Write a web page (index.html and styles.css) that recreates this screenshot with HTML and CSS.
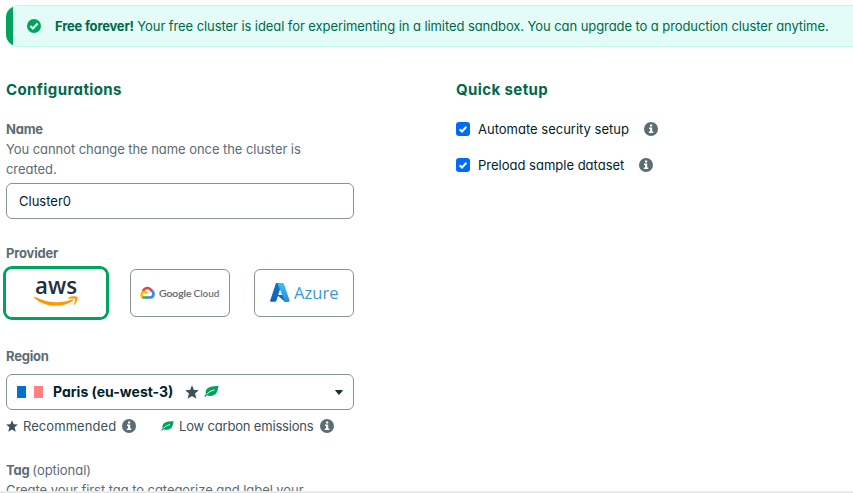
FILE: index.html
```html
<!DOCTYPE html>
<html lang="en">
<head>
<meta charset="utf-8">
<title>Create cluster</title>
<link rel="stylesheet" href="styles.css">
</head>
<body>
<svg class="defs" width="0" height="0" aria-hidden="true">
  <symbol id="info" viewBox="0 0 14 14"><circle cx="7" cy="7" r="7" fill="#5c6c75"/><path d="M6 2.600h2.200v2H6zM5 5.600h3.200v4h1.100v1.400H4.800V9.600H6V7H5z" fill="#fff"/></symbol>
  <symbol id="star" viewBox="0 0 14 14"><path d="M7 .2l1.900 4.700 5 .3-3.900 3.200 1.400 5.400L7 11l-4.400 2.800L4 8.400.1 5.200l5-.3z" fill="#3d4f58"/></symbol>
  <symbol id="leaf" viewBox="0 0 15 13"><path d="M14.700.9C11 .9 5.500 1 3 3.700 1.500 5.400 1.400 7.300 2 8.900L.3 11.100l.8.9 1.900-1.700c3.400 1.300 7.600.6 9.600-2.500C14 5.500 13.800 2.800 14.700.9z" fill="#00a35c"/><path d="M3 9.200C5 6.700 7.300 5.500 10.500 4.900" fill="none" stroke="#fff" stroke-width="1"/></symbol>
  <symbol id="check" viewBox="0 0 14 14"><path d="M3.700 7.200l2.300 2.300 4.400-4.700" fill="none" stroke="#fff" stroke-width="2"/></symbol>
</svg>
<div class="banner">
  <svg class="banner-icon" viewBox="0 0 14 14"><circle cx="7" cy="7" r="7" fill="#00a35c"/><path d="M3.300 7l2.600 2.600 4.800-5" fill="none" stroke="#e3fcf7" stroke-width="2.100"/></svg>
  <p><b>Free forever!</b> <span class="banner-text">Your free cluster is ideal for experimenting in a limited sandbox. You can upgrade to a production cluster anytime.</span></p>
</div>
<main class="columns">
  <section class="config">
    <h2>Configurations</h2>
    <div class="label">Name</div>
    <p class="help">You cannot change the name once the cluster is<br>created.</p>
    <div class="input">Cluster0</div>
    <div class="label provider-label">Provider</div>
    <div class="providers">
      <div class="card selected">
        <svg width="44" height="30" viewBox="0 0 44 30"><text x="1" y="15.500" class="aws" textLength="42" lengthAdjust="spacingAndGlyphs">aws</text><path d="M0 19.200q.3-.9 1.300-.3C13 25 27 25.800 38.600 21.300q1.600-.4.800 1C29 30.500 10.500 29.500.3 20z" fill="#ff9900"/><path d="M34.500 19.700c2.600-1.700 8-1.800 8.800-.8.700 1.300-.3 5.600-2.900 7.900q-1 .6-.5-.6c.8-2 1.700-4.400 1.200-5-.8-.9-3.700-.6-6.200-.500q-1-.2-.4-1z" fill="#ff9900"/></svg>
      </div>
      <div class="card">
        <svg width="80" height="14" viewBox="0 0 80 14"><g fill="none" stroke-width="2.700"><path d="M3 5.500C4.500 1.200 9.500.7 11.500 4.900" stroke="#ea4335"/><path d="M11 4.300c3.600 1.500 3.300 7.200-.7 7.200H7.500" stroke="#4285f4"/><path d="M8 11.500H4.200c-1 0-1.600-.3-2.200-.9" stroke="#34a853"/><path d="M2.700 11C.5 9 1.700 5.700 4.500 5.900c1.400 0 2.200.8 2.700 1.800" stroke="#fbbc05"/></g><text x="19" y="10.800" class="google" textLength="32.500" lengthAdjust="spacingAndGlyphs">Google</text><text x="53.500" y="10.800" class="google light" textLength="26" lengthAdjust="spacingAndGlyphs">Cloud</text></svg>
      </div>
      <div class="card">
        <svg width="70" height="22" viewBox="0 0 70 22"><defs><linearGradient id="az" x1="0" y1="1" x2="1" y2="0"><stop offset="0" stop-color="#0b63b6"/><stop offset="1" stop-color="#1473c9"/></linearGradient><linearGradient id="az2" x1="0" y1="0" x2="0" y2="1"><stop offset="0" stop-color="#3cc4f2"/><stop offset="1" stop-color="#2589df"/></linearGradient></defs><path d="M7 1h6L7.500 18.500q-.4 1.300-1.700 1.300H1.900Q.7 19.800 1.200 18.500z" fill="url(#az)"/><path d="M8 13h8l3 6.800h-3z" fill="#0868bd"/><path d="M8.500 1h5.200q1 0 1.300 1l5.600 16.500q.4 1.300-.9 1.300h-5.300q1.100-.5.700-1.500z" fill="url(#az2)"/><text x="25" y="17" class="azure" textLength="44.500" lengthAdjust="spacingAndGlyphs">Azure</text></svg>
      </div>
    </div>
    <div class="label region-label">Region</div>
    <div class="select">
      <span class="flag"></span>
      <span class="region">Paris (eu-west-3)</span>
      <svg class="star-lg"><use href="#star"/></svg>
      <svg class="leaf-lg"><use href="#leaf"/></svg>
      <svg class="caret" viewBox="0 0 8 5"><path d="M.5 0h7q.7 0 .3.600L4.500 4.500q-.5.500-1 0L.2.600Q-.2 0 .5 0z" fill="#1c2d38"/></svg>
    </div>
    <div class="legend">
      <svg class="star-sm"><use href="#star"/></svg><span class="rec">Recommended</span><svg class="info"><use href="#info"/></svg>
      <svg class="leaf-sm"><use href="#leaf"/></svg><span class="low">Low carbon emissions</span><svg class="info"><use href="#info"/></svg>
    </div>
    <div class="label tag-label">Tag <span class="optional">(optional)</span></div>
    <p class="help">Create your first tag to categorize and label your</p>
  </section>
  <section class="quick">
    <h2>Quick setup</h2>
    <div class="option"><span class="box"><svg width="14" height="14"><use href="#check"/></svg></span><span class="opt-a">Automate security setup</span><svg class="info"><use href="#info"/></svg></div>
    <div class="option"><span class="box"><svg width="14" height="14"><use href="#check"/></svg></span><span class="opt-b">Preload sample dataset</span><svg class="info"><use href="#info"/></svg></div>
  </section>
</main>
<div class="footer-edge"></div>
</body>
</html>
```
FILE: styles.css
```css
* { box-sizing: border-box; }
body { margin: 0; height: 493px; overflow: hidden; position: relative; background: #fff; font: 13px/20px Inter, "Open Sans", sans-serif; font-feature-settings: "cv11" 1; color: #5c6c75; white-space: nowrap; }
.defs { position: absolute; }
p, h2 { margin: 0; }
svg { flex: none; display: block; overflow: visible; }
.banner { display: flex; align-items: center; margin: 5px 0 0 6px; height: 42px; padding-left: 21px; border: 1px solid #c0fae6; border-width: 1px 0; border-radius: 12px 0 0 12px; background: linear-gradient(to right, #00a35c 7px, #e3fcf7 7px); color: #00684a; }
.banner-icon { width: 14px; height: 14px; margin-right: 14px; }
.banner b { letter-spacing: -0.2px; }
.banner-text { letter-spacing: -0.08px; }
.columns { display: grid; grid-template-columns: 348px 300px; column-gap: 102px; margin: 31px 0 0 6px; }
h2 { font-size: 15px; line-height: 24px; font-weight: 700; letter-spacing: 0.4px; color: #00684a; }
.label { font-weight: 700; letter-spacing: -0.2px; margin-top: 17px; }
.help { letter-spacing: -0.06px; }
.input { height: 36px; margin-top: 4px; border: 1px solid #889397; border-radius: 6px; padding: 7px 12px; color: #001e2b; }
.provider-label { margin-top: 24px; }
.providers { display: grid; grid-template-columns: repeat(3, 100px); column-gap: 24px; margin-top: 6px; }
.card { display: flex; align-items: center; justify-content: center; height: 48px; border: 1px solid #889397; border-radius: 6px; }
.card.selected { border-color: #fff; box-shadow: 0 0 0 3px #00a35c; }
.aws { font: 600 23px "Open Sans", sans-serif; fill: #252f3e; }
.google { font: 500 10px Lato, sans-serif; fill: #62696e; stroke: #62696e; stroke-width: 0.2px; }
.google.light { stroke: none; }
.azure { font: 400 17px "Open Sans", sans-serif; fill: #3999d8; }
.region-label { margin-top: 29px; }
.select { display: flex; align-items: center; height: 36px; margin-top: 8px; border: 1px solid #889397; border-radius: 6px; padding: 0 10px; color: #001e2b; }
.flag { width: 26px; height: 12px; background: linear-gradient(to right, #0072ce 9px, #fff 9px 17px, #ff8080 17px); margin: 0 10px 1px 0; }
.region { width: 121px; margin-right: 11px; font-size: 14px; font-weight: 700; }
.star-lg { width: 14px; height: 14px; margin-right: 5px; }
.leaf-lg { width: 15px; height: 13px; margin-bottom: 1px; }
.caret { width: 8px; height: 5px; margin-left: auto; }
.legend { display: flex; align-items: center; margin-top: 6px; color: #3d4f58; }
.star-sm { width: 12px; height: 12px; margin-right: 5px; }
.rec { width: 93px; margin-right: 6px; letter-spacing: 0.06px; }
.leaf-sm { width: 13px; height: 12px; margin: 0 5px 0 25px; }
.low { width: 134px; margin-right: 7px; letter-spacing: -0.18px; }
.info { width: 14px; height: 14px; }
.tag-label { margin-top: 24px; }
.optional { font-weight: 400; letter-spacing: -0.05px; }
.option { display: flex; align-items: center; height: 20px; margin-top: 16px; color: #001e2b; }
h2 + .option { margin-top: 17px; }
.box { width: 14px; height: 14px; border-radius: 3px; background: #016bf8; margin-right: 8px; }
.opt-a { width: 151px; margin-right: 15px; }
.opt-b { width: 146px; margin-right: 15px; }
.footer-edge { position: absolute; left: 0; right: 0; bottom: 0; height: 2px; background: linear-gradient(#f0f1f1, #dfe1e2); }
```
